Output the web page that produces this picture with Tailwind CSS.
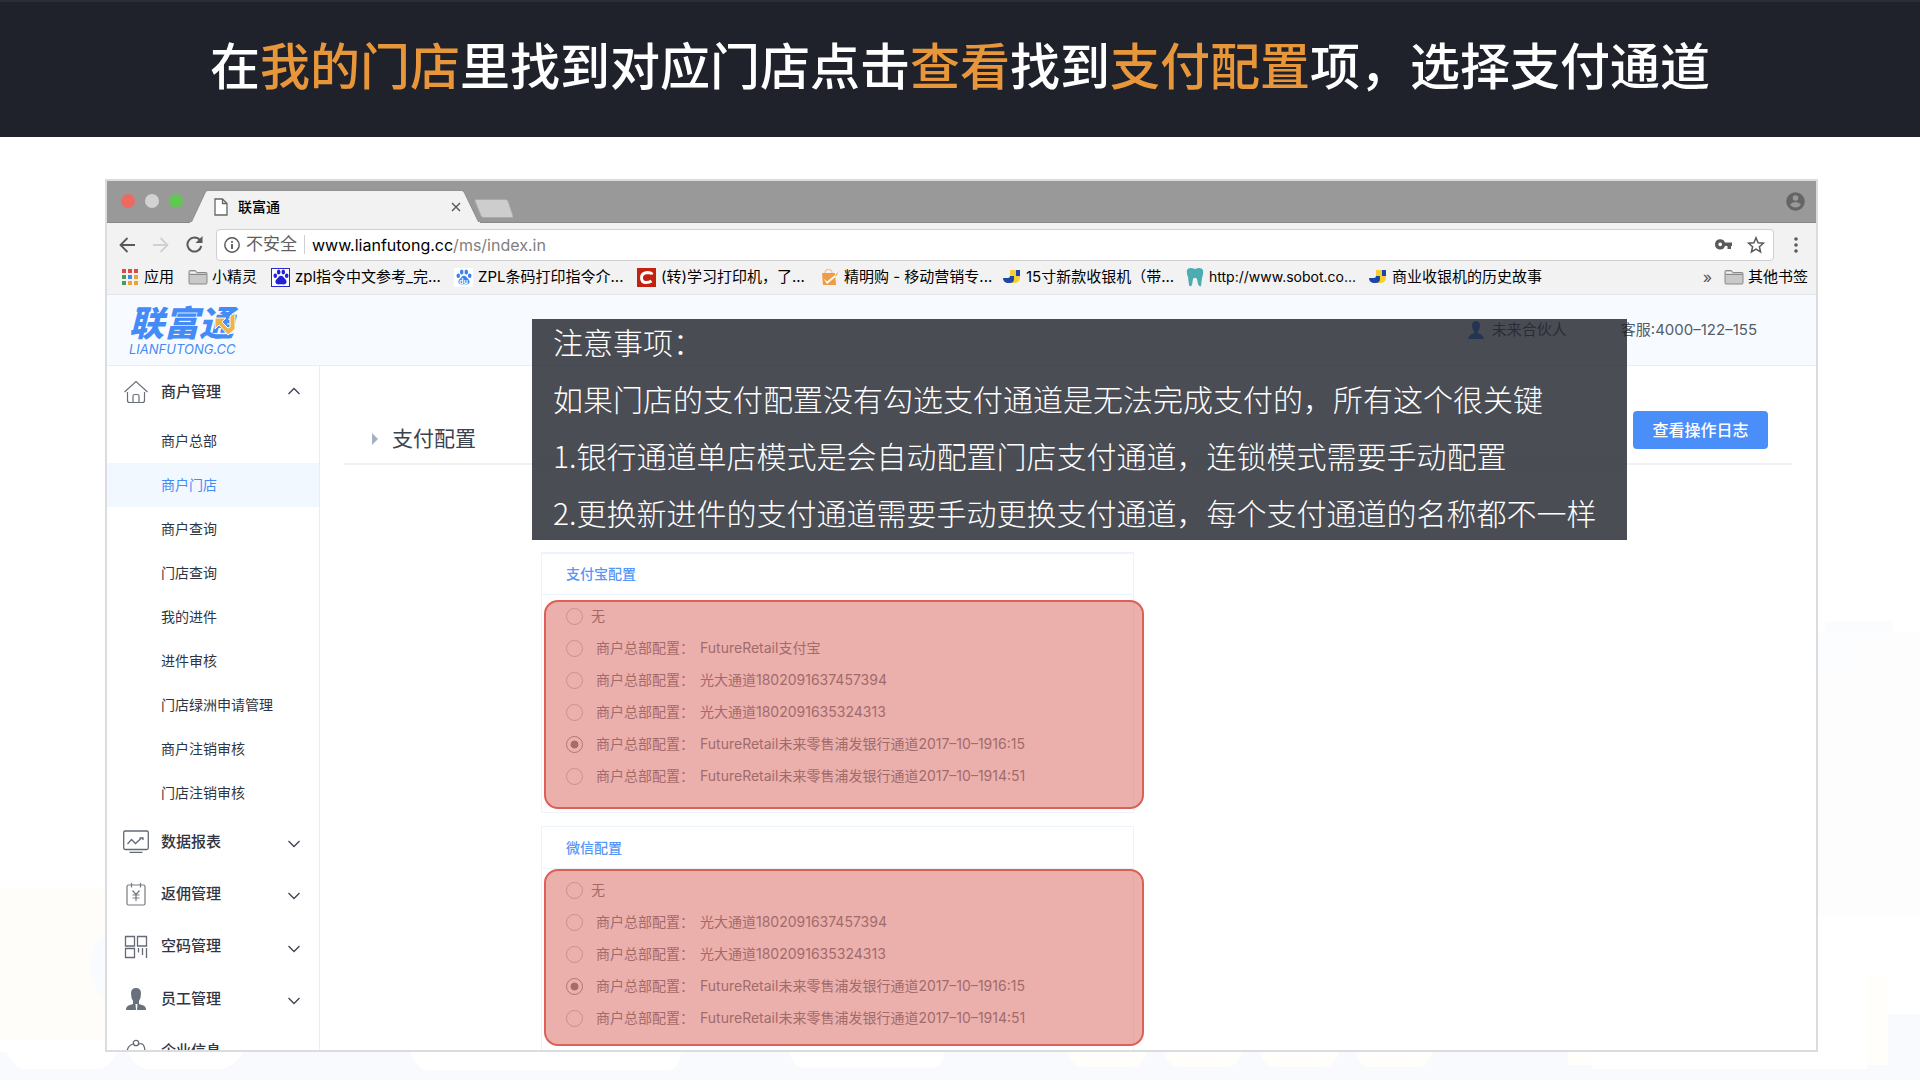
<!DOCTYPE html>
<html lang="zh-CN">
<head>
<meta charset="utf-8">
<title>支付配置</title>
<script src="https://cdn.jsdelivr.net/npm/@tailwindcss/browser@4"></script>
</head>
<body class="relative flex h-screen flex-col overflow-hidden bg-white font-[Inter,'Noto_Sans_CJK_SC',sans-serif] text-[#2f3542]">

<svg class="hidden">
  <symbol id="down" viewBox="0 0 12 8"><path d="M.5 1 6 6.500 11.500 1" fill="none" stroke="#3d4450" stroke-width="1.300"/></symbol>
  <symbol id="folder" viewBox="0 0 20 16"><path d="M1 14V2.500Q1 1.500 2 1.500h5.500l1.500 2h9q1 0 1 1V14q0 1-1 1H2q-1 0-1-1Z" fill="#c9c9c9" stroke="#8a8a8a"/><path d="M1.500 5.500h17" stroke="#8a8a8a"/><path d="M2 3h5l1 1.500H2Z" fill="#f2f2f2"/></symbol>
  <symbol id="paw" viewBox="0 0 16 16"><ellipse cx="2.300" cy="6.700" rx="1.800" ry="2.300"/><ellipse cx="5.700" cy="3" rx="1.800" ry="2.500"/><ellipse cx="10.300" cy="3" rx="1.800" ry="2.500"/><ellipse cx="13.700" cy="6.700" rx="1.800" ry="2.300"/><path d="M8 6.800c2 0 2.600 1.700 3.900 3 1.700 1.600 2 2.800 1.300 4.300-1 2-3.300 1.200-5.200 1.200s-4.200.8-5.200-1.200C2 12.600 2.400 11.400 4.100 9.800 5.400 8.500 6 6.800 8 6.800Z"/></symbol>
  <symbol id="jd" viewBox="0 0 18 14"><path d="M7 0h10v7q0 6-6 6H9V7H7Z" fill="#f5cf35"/><path d="M13 0h4v6h-4ZM0 8h5q2 0 2-2h4v3q0 4-4 4H4Q0 12 0 8Z" fill="#1d46a5"/></symbol>
</svg>

<!-- Faint city skyline behind the slide -->
<svg class="absolute inset-0 -z-10 h-full w-full" viewBox="0 0 1920 1080" preserveAspectRatio="none">
  <path d="M0 888h110v152H0Z" fill="#fffdf9"/>
  <path d="M112 930q-22 12-22 36t22 36Z" fill="#f8fcff"/>
  <path d="M1825 621h68v10h-68Z" fill="#fafcfe"/><path d="M1818 631h40v40l-40 10Z" fill="#fbfdff"/><path d="M1858 631h62v285h-102V680l40-9Z" fill="#fdfdfe"/>
  <path d="M0 1052h1888v-38h32v66H0Z" fill="#f8fafe"/>
  <path d="M6 1052h112q-10 17-20 17H26q-10 0-20-17ZM128 1052h116q-12 17-24 17h-72q-12 0-20-17ZM410 1052h271q-2 18-14 18H430q-14 0-20-18ZM790 1052h155q-3 16-15 16H805q-12 0-15-16ZM1592 1052h275v17h-275Z" fill="#fff"/>
  <path d="M1068 1052h79q-5 15-15 15h-49q-10 0-15-15ZM1164 1052h78q-5 15-15 15h-48q-10 0-15-15ZM1260 1052h79q-5 15-15 15h-49q-10 0-15-15ZM1355 1052h78q-5 15-15 15h-48q-10 0-15-15ZM1568 1052h24v13h-24ZM1867 975h21v90h-21Z" fill="#fffefa"/>
</svg>

<header class="flex h-[137px] shrink-0 items-center justify-center border-t-2 border-[#2a2d38] bg-[#1f212b] pb-1.5">
  <h1 class="whitespace-nowrap text-[50px] leading-none font-medium text-white">在<span class="text-[#e8963a]">我的门店</span>里找到对应门店点击<span class="text-[#e8963a]">查看</span>找到<span class="text-[#e8963a]">支付配置</span>项，选择支付通道</h1>
</header>

<main class="relative mt-[42px] mr-[102px] mb-7 ml-[105px] flex min-h-0 flex-1 flex-col border-2 border-[#dadcdf] bg-white">

  <!-- Browser tabs -->
  <div class="flex h-[42px] shrink-0 items-end border-b border-[#888] bg-[#999] pl-3.5">
    <div class="mb-3.5 flex gap-[10px]">
      <span class="size-3.5 rounded-full bg-[#ec6a5f]"></span>
      <span class="size-3.5 rounded-full bg-[#d2d2d2]"></span>
      <span class="size-3.5 rounded-full bg-[#62c655]"></span>
    </div>
    <div class="relative -mb-px ml-0.5 flex h-[33px] w-[300px] items-center pr-6 pl-[29px]">
      <svg class="absolute inset-0 h-full w-full" viewBox="0 0 300 33" preserveAspectRatio="none"><path d="M6 33 20.500 2Q21 .5 23 .5h253q2 0 3 1.500L294 33Z" fill="#f2f2f2" stroke="#858585" stroke-width=".8"/><path d="M5 32.500h290" stroke="#f2f2f2"/></svg>
      <svg class="relative h-[18px] w-3.5" viewBox="0 0 14 18"><path d="M1 1h7.500L13 5.500V17H1ZM8.500 1v4.500H13" fill="#fff" stroke="#666" stroke-width="1.300"/></svg>
      <span class="relative ml-2.5 text-sm font-medium text-black">联富通</span>
      <button class="relative ml-auto size-2.5" aria-label="关闭标签页"><svg class="size-2.5" viewBox="0 0 10 10"><path d="m1 1 8 8M9 1 1 9" stroke="#555" stroke-width="1.400"/></svg></button>
    </div>
    <svg class="mb-1 -ml-3 h-[19px] w-10" viewBox="0 0 40 19"><path d="M3 .5h29q2 0 3 1.500l5 15q.5 1.500-1 1.500H11q-2 0-3-1.500l-6-15Q1.500.5 3 .5Z" fill="#cdcdcd" stroke="#aaa"/></svg>
    <svg class="mr-[11px] mb-[11px] ml-auto size-[19px]" viewBox="0 0 19 19"><circle cx="9.500" cy="9.500" r="9.300" fill="#656565"/><circle cx="9.500" cy="6" r="2.800" fill="#999"/><path d="M4 12.500q2-2.500 5.500-2.500t5.500 2.500q-2 3-5.500 3T4 12.500Z" fill="#999"/></svg>
  </div>

  <!-- Address bar -->
  <div class="flex h-[39px] shrink-0 items-center bg-[#f2f2f2] pt-1 pr-[18px] pl-3">
    <svg class="h-4 w-4" viewBox="0 0 16 16"><path d="M16 8H1.500M8.500 1l-7 7 7 7" fill="none" stroke="#5a5a5a" stroke-width="1.800"/></svg>
    <svg class="ml-[18px] h-4 w-4" viewBox="0 0 16 16"><path d="M0 8h14.500M7.500 1l7 7-7 7" fill="none" stroke="#d0d0d0" stroke-width="1.800"/></svg>
    <svg class="ml-[17px] h-[17px] w-[17px]" viewBox="0 0 17 17"><path d="M14 4.200A7 7 0 1 0 15.300 10" fill="none" stroke="#5a5a5a" stroke-width="2"/><path d="M16.500 0v7h-7Z" fill="#5a5a5a"/></svg>
    <div class="ml-[13px] flex h-8 flex-1 items-center rounded border border-[#cfcfcf] bg-white pr-2 pl-[7px]">
      <svg class="size-4" viewBox="0 0 16 16"><circle cx="8" cy="8" r="7.200" fill="none" stroke="#555" stroke-width="1.400"/><path d="M7.100 7h1.800v5H7.100ZM7.100 4h1.800v1.800H7.100Z" fill="#555"/></svg>
      <span class="ml-1.5 text-[17px] text-[#5f5f5f]">不安全</span>
      <span class="mx-[7px] h-[19px] w-px bg-[#cfcfcf]"></span>
      <span class="text-base text-black">www.lianfutong.cc<span class="text-[#808080]">/ms/index.in</span></span>
      <svg class="ml-auto h-[11px] w-[17px]" viewBox="0 0 17 11"><path fill-rule="evenodd" d="M5.200.300A5.100 5.100 0 1 0 10 7h2.500v3H16V7h1V3.500h-7A5.100 5.100 0 0 0 5.200.300Zm0 3.300a1.800 1.800 0 1 1 0 3.600 1.800 1.800 0 0 1 0-3.600Z" fill="#5a5a5a"/></svg>
      <svg class="ml-[15px] size-[18px]" viewBox="0 0 18 18"><path d="m9 1.800 2.100 5 5.300.4-4 3.500 1.200 5.300L9 13.200 4.400 16l1.200-5.300-4-3.500 5.300-.4Z" fill="none" stroke="#5a5a5a" stroke-width="1.500"/></svg>
    </div>
    <svg class="ml-5 h-4 w-1" viewBox="0 0 4 16"><g fill="#5a5a5a"><circle cx="2" cy="2" r="1.800"/><circle cx="2" cy="8" r="1.800"/><circle cx="2" cy="14" r="1.800"/></g></svg>
  </div>

  <!-- Bookmarks -->
  <nav class="flex h-[33px] shrink-0 items-center border-b border-[#e3e6e8] bg-[#f2f2f2] pr-2 pb-0.5 pl-[15px] text-[15px] whitespace-nowrap text-black">
    <a href="#" class="flex w-[66px] shrink-0 items-center gap-1.5">
      <svg class="size-4" viewBox="0 0 16 16"><path d="M0 0h4v4H0ZM6 0h4v4H6ZM12 0h4v4h-4Z" fill="#dd4b3e"/><path d="M0 6h4v4H0Z" fill="#4a9a5d"/><path d="M6 6h4v4H6Z" fill="#4285f4"/><path d="M12 6h4v4h-4ZM6 12h4v4H6ZM12 12h4v4h-4Z" fill="#e8a634"/><path d="M0 12h4v4H0Z" fill="#4a9a5d"/></svg>应用</a>
    <a href="#" class="flex w-[83px] shrink-0 items-center gap-1"><svg class="h-4 w-5"><use href="#folder"/></svg>小精灵</a>
    <a href="#" class="flex w-[183px] shrink-0 items-center gap-[5px]"><span class="flex size-[19px] items-center justify-center border border-[#2a27d8] bg-white"><svg class="size-4 fill-[#2320dc]"><use href="#paw"/></svg></span>zpl指令中文参考_完...</a>
    <a href="#" class="flex w-[183px] shrink-0 items-center gap-[5px]"><span class="relative flex size-[19px] items-center justify-center bg-white"><svg class="size-4 fill-[#3b82f0]"><use href="#paw"/></svg><span class="absolute bottom-0.5 text-[7px] leading-[7px] font-bold text-white">du</span></span>ZPL条码打印指令介...</a>
    <a href="#" class="flex w-[183px] shrink-0 items-center gap-[5px]"><svg class="size-[19px]" viewBox="0 0 19 19"><path d="M0 0h19v19H0Z" fill="#c3220f"/><path d="M15 6.500Q14.500 4.500 10 4.500 4.500 5 4.500 9.800T9 14.500q3.500 0 5.500-1.500" fill="none" stroke="#fff" stroke-width="3"/></svg>(转)学习打印机，了...</a>
    <a href="#" class="flex w-[183px] shrink-0 items-center gap-[5px]"><svg class="size-[19px]" viewBox="0 0 19 19"><path d="M5 6V4q0-2.500 3.500-2.500T12 4v2" fill="none" stroke="#eeb580"/><path d="M2 5h13l1 12H3Z" fill="#f09c43"/><path d="m3.500 10.500 3.500 3L18 4.500l-2 4-9 7.500Z" fill="#fff"/><path d="M18.500 3 15 8l1.500 0Z" fill="#f09c43"/></svg>精明购 - 移动营销专...</a>
    <a href="#" class="flex w-[183px] shrink-0 items-center gap-[5px]"><svg class="h-3.5 w-[18px]"><use href="#jd"/></svg>15寸新款收银机（带...</a>
    <a href="#" class="flex w-[183px] shrink-0 items-center gap-[5px] text-sm"><svg class="h-5 w-[18px]" viewBox="0 0 18 20"><path d="M1 3Q3-.5 9 2q6-2.500 8 1 .6 4-1 8l-1 8q-2 1-3-2l-1-5q-2-2.500-4 0l-1 6q-2 2.500-3 0l-1-8Q.5 7 1 3Z" fill="#4cadb0"/></svg>http://www.sobot.co...</a>
    <a href="#" class="flex items-center gap-[5px]"><svg class="h-3.5 w-[18px]"><use href="#jd"/></svg>商业收银机的历史故事</a>
    <span class="ml-auto text-base text-[#555]">»</span>
    <a href="#" class="ml-3 flex items-center gap-1"><svg class="h-4 w-5"><use href="#folder"/></svg>其他书签</a>
  </nav>

  <!-- Site header -->
  <div class="flex h-[71px] shrink-0 items-center border-b border-[#e8eff5] bg-[#f7fbff] pr-[59px] pl-[22px] text-[15px] text-[#555b66]">
    <a href="#" class="relative block text-[#448bf7]">
      <span class="block text-[35px] leading-[38px] font-black italic">联富通</span>
      <span class="block text-[13px] leading-[14px] italic">LIANFUTONG.CC</span>
      <svg class="absolute top-2 right-0 h-6 w-6" viewBox="0 0 24 24"><path d="M3 6h11L10 10l6 6 2-1V4l5-3v16l-7 6-9-10-4 4Z" fill="#efb445" stroke="#f7fbff"/></svg>
    </a>
    <span class="ml-auto flex items-center gap-2">
      <svg class="h-[18px] w-4" viewBox="0 0 16 18"><path d="M8 0q4 0 4 4.500 0 4-2 6v1.500q5 1.500 6 6H0q1-4.500 6-6v-1.500q-2-2-2-6Q4 0 8 0Z" fill="#3f86f5"/></svg>未来合伙人</span>
    <span class="ml-[54px]">客服:4000–122–155</span>
  </div>

  <div class="flex min-h-0 flex-1 overflow-hidden">
    <nav class="w-[213px] shrink-0 border-r border-[#e8edf4] text-[15px]">
      <button class="flex h-[53px] w-full items-center pr-[19px] pl-4">
        <svg class="size-[26px]" viewBox="0 0 26 26"><path d="M1.500 12 13 1.500 24.500 12M4.500 12v8.500q0 2 2 2h13q2 0 2-2V12M10 22v-6q0-1.500 1.500-1.500h3Q16 14.500 16 16v6" fill="none" stroke="#6a707a" stroke-width="1.200"/></svg>
        <span class="ml-3 font-medium">商户管理</span>
        <svg class="mb-1 ml-auto h-2 w-3 rotate-180"><use href="#down"/></svg>
      </button>
      <ul class="mb-px text-sm leading-[44px]">
        <li><a href="#" class="block pl-[54px]">商户总部</a></li>
        <li><a href="#" class="block bg-[#f2f8ff] pl-[54px] text-[#448bf7]">商户门店</a></li>
        <li><a href="#" class="block pl-[54px]">商户查询</a></li>
        <li><a href="#" class="block pl-[54px]">门店查询</a></li>
        <li><a href="#" class="block pl-[54px]">我的进件</a></li>
        <li><a href="#" class="block pl-[54px]">进件审核</a></li>
        <li><a href="#" class="block pl-[54px]">门店绿洲申请管理</a></li>
        <li><a href="#" class="block pl-[54px]">商户注销审核</a></li>
        <li><a href="#" class="block pl-[54px]">门店注销审核</a></li>
      </ul>
      <button class="flex h-[52px] w-full items-center pr-[19px] pl-4">
        <svg class="size-[26px]" viewBox="0 0 26 26" fill="none" stroke="#636a75" stroke-width="1.300"><rect x=".7" y="2" width="24.600" height="18.500" rx="1.500"/><path d="M6.500 23.300h13M4.500 15l4-4.500 4 4 6-5.500M16.500 9H20v2"/></svg>
        <span class="ml-3 font-medium">数据报表</span><svg class="mt-1 ml-auto h-2 w-3"><use href="#down"/></svg>
      </button>
      <button class="flex h-[52px] w-full items-center pr-[19px] pl-4">
        <svg class="size-[26px]" viewBox="0 0 26 26" fill="none" stroke="#757b85" stroke-width="1.200"><path d="M6.500 4h-1Q4 4 4 5.500v17Q4 24 5.500 24h15q1.500 0 1.500-1.500v-17Q22 4 20.500 4h-1M6.500 4h13M8.500 2v4.500M17.500 2v4.500M9.500 9.500l3.500 4 3.500-4M13 13.500V20M9.500 14h7M9.500 17h7"/></svg>
        <span class="ml-3 font-medium">返佣管理</span><svg class="mt-1 ml-auto h-2 w-3"><use href="#down"/></svg>
      </button>
      <button class="flex h-[53px] w-full items-center pr-[19px] pl-4">
        <svg class="size-[26px]" viewBox="0 0 26 26" fill="none" stroke="#636a75" stroke-width="1.300"><path d="M2.500 2.500h9V12h-9ZM14.500 2.500h9V12h-9ZM2.500 14.500h9v9h-9ZM15.500 14v4.500M19.500 14v7M23.500 14v10"/></svg>
        <span class="ml-3 font-medium">空码管理</span><svg class="mt-1 ml-auto h-2 w-3"><use href="#down"/></svg>
      </button>
      <button class="flex h-[52px] w-full items-center pr-[19px] pl-4">
        <svg class="size-[26px]" viewBox="0 0 26 26"><path d="M13 2q5 0 5 5.500 0 4.500-2 7.500v3l4.500 1.500Q23 20.500 23 24H3q0-3.500 2.500-4.500L10 18v-3q-2-3-2-7.500Q8 2 13 2Z" fill="#68707b"/><path d="m12.500 18 .5 6h1l.5-6Z" fill="#fff"/></svg>
        <span class="ml-3 font-medium">员工管理</span><svg class="mt-1 ml-auto h-2 w-3"><use href="#down"/></svg>
      </button>
      <button class="flex h-[52px] w-full items-center pr-[19px] pl-4">
        <svg class="size-[26px]" viewBox="0 0 26 26" fill="none" stroke="#636a75" stroke-width="1.300"><circle cx="13" cy="5" r="2.700"/><path d="M10 6q-6 2-6 9t9 9 9-9-6-9"/></svg>
        <span class="ml-3 font-medium">企业信息</span>
      </button>
    </nav>

    <section class="min-w-0 flex-1 pr-6 pl-6">
      <div class="flex h-[99px] items-end justify-between border-b-2 border-[#f0f2f6] pr-6 pb-3.5 pl-7">
        <h2 class="flex items-center gap-3.5 text-[21px] leading-5 text-[#3a4350]"><svg class="h-3 w-1.5" viewBox="0 0 6 12"><path d="M0 0v12l6-6Z" fill="#a3b1c2"/></svg>支付配置</h2>
        <button class="h-[38px] w-[135px] rounded-sm bg-[#4a8ff9] text-base font-medium text-white">查看操作日志</button>
      </div>

      <fieldset class="relative mt-[87px] ml-[197px] h-[261px] w-[593px] border border-t-2 border-[#edf3fa] text-sm text-[#6b727d]">
        <h3 class="h-[41px] border-b border-[#edf3fa] pl-6 leading-[40px] font-medium text-[#5598fa]">支付宝配置</h3>
        <div class="mt-[5px] flex flex-col pl-6">
          <label class="flex h-8 items-center gap-2"><input type="radio" name="alipay" class="size-[17px] appearance-none rounded-full border border-[#bbb] bg-white">无</label>
          <label class="flex h-8 items-center gap-[13px]"><input type="radio" name="alipay" class="size-[17px] appearance-none rounded-full border border-[#bbb] bg-white"><span class="flex"><span class="w-[104px]">商户总部配置：</span>FutureRetail支付宝</span></label>
          <label class="flex h-8 items-center gap-[13px]"><input type="radio" name="alipay" class="size-[17px] appearance-none rounded-full border border-[#bbb] bg-white"><span class="flex"><span class="w-[104px]">商户总部配置：</span>光大通道1802091637457394</span></label>
          <label class="flex h-8 items-center gap-[13px]"><input type="radio" name="alipay" class="size-[17px] appearance-none rounded-full border border-[#bbb] bg-white"><span class="flex"><span class="w-[104px]">商户总部配置：</span>光大通道1802091635324313</span></label>
          <label class="flex h-8 items-center gap-[13px]"><input type="radio" name="alipay" checked class="size-[17px] appearance-none rounded-full border border-[#888] bg-white bg-radial from-[#777] from-35% to-transparent to-40%"><span class="flex"><span class="w-[104px]">商户总部配置：</span>FutureRetail未来零售浦发银行通道2017–10–1916:15</span></label>
          <label class="flex h-8 items-center gap-[13px]"><input type="radio" name="alipay" class="size-[17px] appearance-none rounded-full border border-[#bbb] bg-white"><span class="flex"><span class="w-[104px]">商户总部配置：</span>FutureRetail未来零售浦发银行通道2017–10–1914:51</span></label>
        </div>
        <div class="pointer-events-none absolute top-[46px] left-0.5 h-[209px] w-[600px] rounded-[14px] border-2 border-[#dd5f58] bg-[#d7615a]/50"></div>
      </fieldset>

      <fieldset class="relative mt-[13px] ml-[197px] h-[261px] w-[593px] border border-[#edf3fa] text-sm text-[#6b727d]">
        <h3 class="h-[42px] border-b border-[#edf3fa] pl-6 leading-[41px] font-medium text-[#5598fa]">微信配置</h3>
        <div class="mt-[5px] flex flex-col pl-6">
          <label class="flex h-8 items-center gap-2"><input type="radio" name="wechat" class="size-[17px] appearance-none rounded-full border border-[#bbb] bg-white">无</label>
          <label class="flex h-8 items-center gap-[13px]"><input type="radio" name="wechat" class="size-[17px] appearance-none rounded-full border border-[#bbb] bg-white"><span class="flex"><span class="w-[104px]">商户总部配置：</span>光大通道1802091637457394</span></label>
          <label class="flex h-8 items-center gap-[13px]"><input type="radio" name="wechat" class="size-[17px] appearance-none rounded-full border border-[#bbb] bg-white"><span class="flex"><span class="w-[104px]">商户总部配置：</span>光大通道1802091635324313</span></label>
          <label class="flex h-8 items-center gap-[13px]"><input type="radio" name="wechat" checked class="size-[17px] appearance-none rounded-full border border-[#888] bg-white bg-radial from-[#777] from-35% to-transparent to-40%"><span class="flex"><span class="w-[104px]">商户总部配置：</span>FutureRetail未来零售浦发银行通道2017–10–1916:15</span></label>
          <label class="flex h-8 items-center gap-[13px]"><input type="radio" name="wechat" class="size-[17px] appearance-none rounded-full border border-[#bbb] bg-white"><span class="flex"><span class="w-[104px]">商户总部配置：</span>FutureRetail未来零售浦发银行通道2017–10–1914:51</span></label>
        </div>
        <div class="pointer-events-none absolute top-[42px] left-0.5 h-[177px] w-[600px] rounded-[14px] border-2 border-[#dd5f58] bg-[#d7615a]/50"></div>
      </fieldset>
    </section>
  </div>

  <!-- Notice laid over the page -->
  <aside class="absolute top-[138px] left-[425px] h-[221px] w-[1095px] bg-[#1e2029]/80 pl-[21px] font-['Noto_Sans_CJK_SC',sans-serif] text-[30px] leading-[57px] font-light whitespace-nowrap text-white">
    <div class="-mt-1.5">
      <p>注意事项：</p>
      <p>如果门店的支付配置没有勾选支付通道是无法完成支付的，所有这个很关键</p>
      <p>1.银行通道单店模式是会自动配置门店支付通道，连锁模式需要手动配置</p>
      <p>2.更换新进件的支付通道需要手动更换支付通道，每个支付通道的名称都不一样</p>
    </div>
  </aside>
</main>
</body>
</html>
